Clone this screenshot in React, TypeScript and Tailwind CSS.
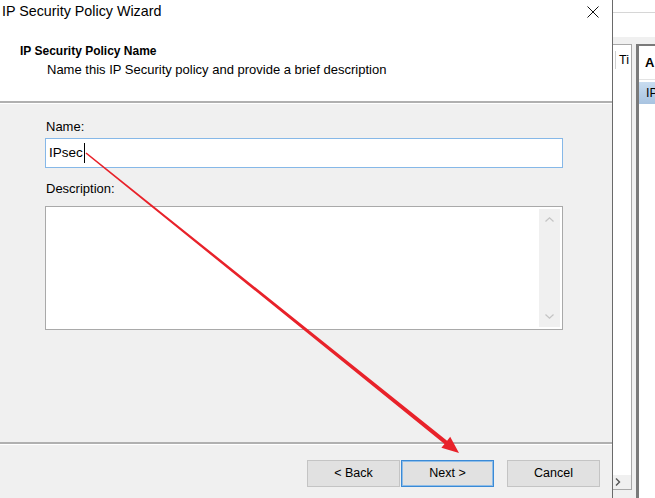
const font = "font-['Liberation_Sans',Arial,sans-serif]";

function CloseIcon() {
  return (
    <svg width="12" height="12" viewBox="0 0 12 12" className="mt-[6px]">
      <path d="M0.5 0.5 L11.5 11.5 M11.5 0.5 L0.5 11.5" stroke="#111" strokeWidth="1" />
    </svg>
  );
}

function Chevron({ up }: { up?: boolean }) {
  return (
    <svg width="9" height="5" viewBox="0 0 9 5">
      <path
        d={up ? "M0.5 4.5 L4.5 0.8 L8.5 4.5" : "M0.5 0.5 L4.5 4.2 L8.5 0.5"}
        fill="none"
        stroke="#c4c4c4"
        strokeWidth="1.2"
      />
    </svg>
  );
}

function WinButton({ label, focused }: { label: string; focused?: boolean }) {
  return (
    <button
      className={
        focused
          ? "h-[27px] w-[93px] border border-[#3a8ad6] bg-[#e1e1e1] text-[12.5px] text-black shadow-[inset_0_0_0_1px_#8fbde8]"
          : "h-[27px] w-[93px] border border-[#c4c4c4] bg-[#e1e1e1] text-[12.5px] text-black"
      }
    >
      {label}
    </button>
  );
}

// the red annotation arrow drawn on top of the screenshot
function RedArrow() {
  return (
    <svg className="pointer-events-none absolute left-0 top-0" width="655" height="498">
      <polygon
        points="85.5,153.6 444.5,443.9 441.4,447.8 459,453 450.2,436.8 447.1,440.7 86.5,152.4"
        fill="#e8222a"
      />
    </svg>
  );
}

export default function App() {
  return (
    <div className={`relative flex h-[498px] w-[655px] overflow-hidden bg-white ${font} text-black`}>
      {/* wizard dialog */}
      <div className="flex w-[613px] shrink-0 flex-col border-r border-[#6a6a6a]">
        <div className="h-[101px] bg-white">
          <div className="flex items-start justify-between pr-[13px]">
            <div className="pl-[2px] pt-[2px] text-[14.3px] leading-[18px]">IP Security Policy Wizard</div>
            <CloseIcon />
          </div>
          <div className="mt-[23px] pl-[20px] text-[12px] font-bold leading-[16px]">IP Security Policy Name</div>
          <div className="mt-[3px] pl-[47px] text-[13px] leading-[16px]">
            Name this IP Security policy and provide a brief description
          </div>
        </div>
        <div className="h-[2px] bg-[#b0b0b0]" />
        <div className="h-px bg-white" />

        <div className="h-[338px] bg-[#f0f0f0] pl-[45px] pt-[16px]">
          <div className="pl-px text-[13px] leading-[14px]">Name:</div>
          <div className="mt-[4px] flex h-[30px] w-[518px] items-center border border-[#86b8e8] bg-white pl-[3px]">
            <span className="text-[13.5px] leading-[16px]">IPsec</span>
            <span className="ml-[1px] h-[20px] w-px bg-black" />
          </div>
          <div className="mt-[14px] pl-px text-[13px] leading-[14px]">Description:</div>
          <div className="mt-[10px] flex h-[124px] w-[518px] justify-end border border-[#a9a9a9] bg-white p-[2px]">
            <div className="flex w-[21px] flex-col items-center justify-between bg-[#f0f0f0] py-[8px]">
              <Chevron up />
              <Chevron />
            </div>
          </div>
        </div>

        <div className="h-[2px] bg-[#b0b0b0]" />
        <div className="h-px bg-white" />
        <div className="flex flex-1 justify-end bg-[#f0f0f0] pr-[12px] pt-[15px]">
          <div className="flex items-start">
            <WinButton label="< Back" />
            <div className="w-[1px]" />
            <WinButton label="Next >" focused />
            <div className="w-[13px]" />
            <WinButton label="Cancel" />
          </div>
        </div>
      </div>

      {/* window behind the dialog */}
      <div className="flex min-w-0 flex-1 flex-col bg-[#f0f0f0]">
        <div className="h-[37px] bg-white pt-[12px]">
          <div className="h-px bg-[#d6d6d6]" />
        </div>
        <div className="flex flex-1 pt-[7px]">
          <div className="flex h-[446px] w-[19px] shrink-0 flex-col overflow-hidden border-r border-t border-b border-[#a8a8a8] bg-white">
            <div className="flex h-[30px] items-center">
              <div className="ml-[2px] h-[18px] w-px bg-[#d0d0d0]" />
              <span className="ml-[3px] text-[12.5px]">Ti</span>
            </div>
            <div className="flex-1" />
            <div className="flex h-[14px] items-center bg-[#f0f0f0] pl-[2px]">
              <svg width="6" height="8" viewBox="0 0 6 8">
                <path d="M1 0.5 L4.5 4 L1 7.5" fill="none" stroke="#555" strokeWidth="1.4" />
              </svg>
            </div>
          </div>
          <div className="ml-[4px] flex min-w-0 flex-1 flex-col overflow-hidden border-l-[3px] border-t-2 border-[#7a7a7a] bg-white">
            <div className="flex h-[34px] items-center border-b border-[#e3e3e3] pl-[6px] text-[13px] font-bold">A</div>
            <div className="mt-[2px] flex h-[22px] items-center bg-gradient-to-b from-[#c8dcf0] to-[#a8c3e0] pl-[7px] text-[12.5px]">
              IP
            </div>
          </div>
        </div>
      </div>

      <RedArrow />
    </div>
  );
}
